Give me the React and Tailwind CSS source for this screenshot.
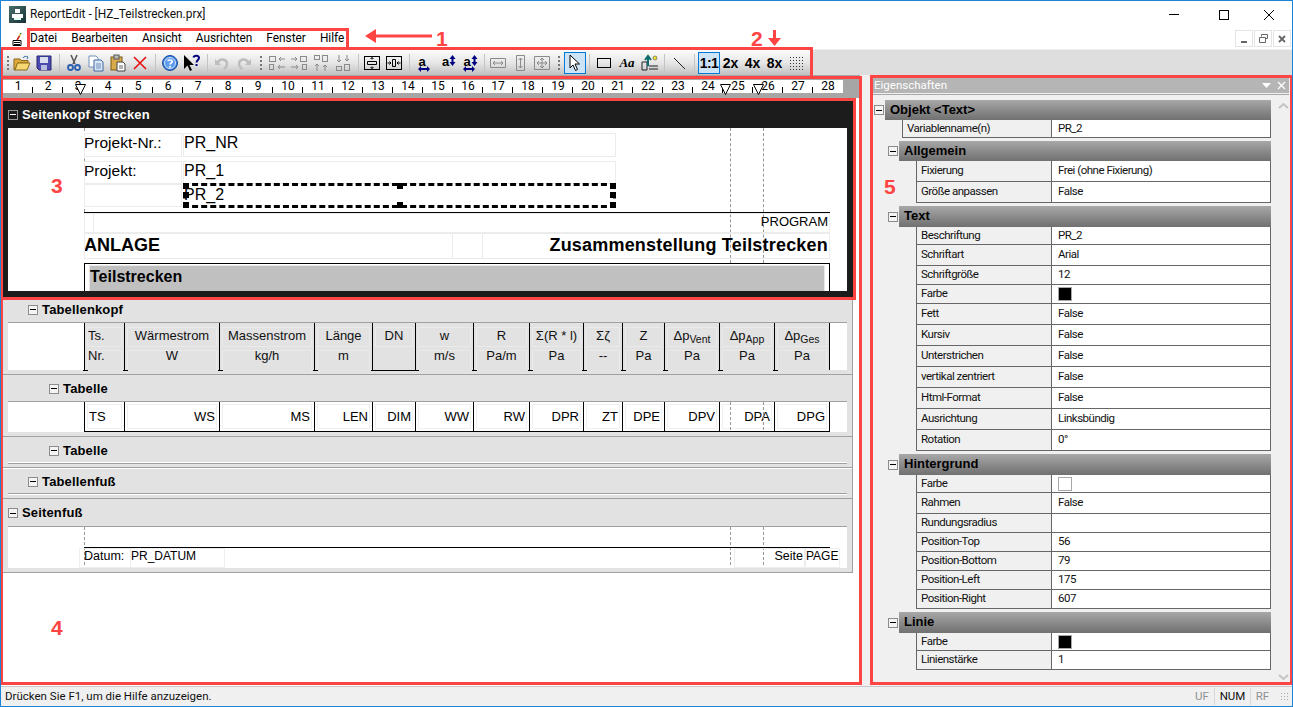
import React from 'react';

const UI = "font-['Roboto',sans-serif]";
const ARIAL = "font-['Liberation_Sans',sans-serif]";

// header and body columns of the report table
const columns = [
  { w: 40, top: 'Ts.', bottom: 'Nr.', body: 'TS', left: true },
  { w: 95, top: 'Wärmestrom', bottom: 'W', body: 'WS' },
  { w: 95, top: 'Massenstrom', bottom: 'kg/h', body: 'MS' },
  { w: 58, top: 'Länge', bottom: 'm', body: 'LEN' },
  { w: 43, top: 'DN', bottom: '', body: 'DIM', dn: true },
  { w: 58, top: 'w', bottom: 'm/s', body: 'WW' },
  { w: 56, top: 'R', bottom: 'Pa/m', body: 'RW' },
  { w: 54, top: 'Σ(R * l)', bottom: 'Pa', body: 'DPR' },
  { w: 39, top: 'Σζ', bottom: '--', body: 'ZT' },
  { w: 42, top: 'Z', bottom: 'Pa', body: 'DPE' },
  { w: 55, top: 'Δp', sub: 'Vent', bottom: 'Pa', body: 'DPV' },
  { w: 55, top: 'Δp', sub: 'App', bottom: 'Pa', body: 'DPA' },
  { w: 55, top: 'Δp', sub: 'Ges', bottom: 'Pa', body: 'DPG' },
];

const propertyGroups = [
  {
    name: 'Objekt <Text>', root: true, h: 20,
    rows: [['Variablenname(n)', 'PR_2', 18]],
  },
  {
    name: 'Allgemein', h: 20,
    rows: [['Fixierung', 'Frei (ohne Fixierung)', 21], ['Größe anpassen', 'False', 21]],
  },
  {
    name: 'Text', h: 21,
    rows: [
      ['Beschriftung', 'PR_2', 18], ['Schriftart', 'Arial', 21], ['Schriftgröße', '12', 19],
      ['Farbe', '#000', 19], ['Fett', 'False', 21], ['Kursiv', 'False', 21],
      ['Unterstrichen', 'False', 21], ['vertikal zentriert', 'False', 21], ['Html-Format', 'False', 21],
      ['Ausrichtung', 'Linksbündig', 21], ['Rotation', '0°', 21],
    ],
  },
  {
    name: 'Hintergrund', h: 21,
    rows: [
      ['Farbe', '#fff', 18], ['Rahmen', 'False', 21], ['Rundungsradius', '', 19],
      ['Position-Top', '56', 19], ['Position-Bottom', '79', 19], ['Position-Left', '175', 19], ['Position-Right', '607', 19],
    ],
  },
  {
    name: 'Linie', h: 21,
    rows: [['Farbe', '#000', 18], ['Linienstärke', '1', 19]],
  },
];

const Minus = ({ dark }) => (
  <span className={`flex h-[10px] w-[10px] shrink-0 items-center justify-center border ${dark ? 'border-[#999] bg-[#1c1c1c]' : 'border-[#8c8c8c] bg-[#f4f4f4]'}`}>
    <span className={`h-px w-[6px] ${dark ? 'bg-white' : 'bg-black'}`} />
  </span>
);

const Ico = ({ children }) => (
  <svg width="18" height="18" viewBox="0 0 18 18" fill="none">{children}</svg>
);

const Slot = ({ children, className = 'w-[22px]' }) => (
  <div className={`flex h-full shrink-0 items-center justify-center ${className}`}>{children}</div>
);

const Sep = ({ className = 'w-[8px]' }) => (
  <div className={`flex h-full shrink-0 items-center justify-center ${className}`}>
    <span className="h-[18px] w-px bg-[#c4c4c4]" />
  </div>
);

const Grip = ({ className = 'w-[11px]' }) => (
  <div className={`flex h-full shrink-0 flex-col items-center justify-center gap-[2px] ${className}`}>
    <span className="h-[2px] w-[2px] bg-[#777]" />
    <span className="h-[2px] w-[2px] bg-[#777]" />
    <span className="h-[2px] w-[2px] bg-[#777]" />
    <span className="h-[2px] w-[2px] bg-[#777]" />
  </div>
);

const AlignIcon = ({ flip, vertical }) => (
  <svg width="18" height="18" viewBox="0 0 18 18" fill="none" stroke="#8a8a8a">
    <g transform={`${vertical ? 'rotate(90 9 9)' : ''} ${flip ? 'translate(18 0) scale(-1 1)' : ''}`}>
      <rect x="1.5" y="2.5" width="6" height="5" />
      <rect x="1.5" y="10.5" width="4" height="5" />
      <path d="M11 5h6M13 3l-2 2 2 2M10 13h7M12 11l-2 2 2 2" />
    </g>
  </svg>
);

// wide frame with a bar in the middle and arrows pushing outwards
const SpaceIcon = ({ horizontal }) => (
  <svg width="18" height="16" viewBox="0 0 18 16" fill="none" stroke="#000">
    <rect x=".5" y="1.500" width="15" height="13" />
    {horizontal ? (
      <path d="M6.500 4.500h3v7h-3zM1.500 8h3M3.500 6.500L5 8l-1.500 1.500M14.500 8h-3M12.500 6.500L11 8l1.500 1.500" />
    ) : (
      <path d="M3.500 6.500h9v3h-9zM8 2.500v2M6.500 4L8 2.500 9.500 4M8 13.500v-2M6.500 12L8 13.500 9.500 12" />
    )}
  </svg>
);

const SizeIcon = ({ horizontal }) => (
  <svg width="18" height="18" viewBox="0 0 18 18" fill="none" stroke="#8a8a8a">
    {horizontal ? (
      <path d="M.5 4.500h15v9H.5zM3 9h10M5 7L3 9l2 2M11 7l2 2-2 2" />
    ) : (
      <path d="M4.500 1.500h8v15h-8zM8.500 4v10M6.500 6l2-2 2 2M6.500 12l2 2 2-2" />
    )}
  </svg>
);

const LetterIcon = ({ vertical, horizontal }) => (
  <div className="relative h-[18px] w-[18px]">
    <span className={`${ARIAL} absolute left-[3px] top-[-2px] text-[13px] font-bold text-black`}>a</span>
    {vertical && (
      <svg className="absolute left-[10px] top-[1px]" width="7" height="11" viewBox="0 0 7 11" fill="#000080">
        <path d="M3.5 0L6.5 4h-2v3h2l-3 4-3-4h2V4h-2z" />
      </svg>
    )}
    {horizontal && (
      <svg className="absolute bottom-0 left-[2px]" width="12" height="6" viewBox="0 0 12 6" fill="#000080">
        <path d="M0 3l3-3v2h6V0l3 3-3 3V4H3v2z" />
      </svg>
    )}
  </div>
);

const Toolbar = () => (
  <div className="flex h-[26px] w-[811px] items-center bg-linear-to-b from-[#fbfbfb] via-[#e6e6e6] to-[#bdbdbd] pl-[3px]">
    <Grip className="w-[7px]" />
    <Slot>
      <Ico>
        <path d="M1 5h6l1 1.500h7V9H5L2 16H1z" fill="#e0a93a" stroke="#8a6a1c" />
        <path d="M4.500 9H17l-3 7H2z" fill="#f7d674" stroke="#8a6a1c" />
        <path d="M10 4c1-2 3-2 5-1l-1 2" stroke="#3b6ea8" />
      </Ico>
    </Slot>
    <Slot>
      <Ico>
        <path d="M2 2h14v14H4l-2-2z" fill="#4a4ab0" stroke="#26266e" />
        <rect x="5" y="3" width="8" height="6" fill="#d8def0" />
        <rect x="6" y="11" width="6" height="5" fill="#b7bde0" />
      </Ico>
    </Slot>
    <Sep />
    <Slot>
      <Ico>
        <path d="M6 1l4 9M12 1l-4 9" stroke="#555" strokeWidth="1.500" />
        <circle cx="5.500" cy="13.500" r="2.500" stroke="#2c5fb0" strokeWidth="1.800" />
        <circle cx="12.500" cy="13.500" r="2.500" stroke="#2c5fb0" strokeWidth="1.800" />
      </Ico>
    </Slot>
    <Slot>
      <Ico>
        <path d="M2 2h7l2 2v9H2z" fill="#fff" stroke="#6f8fbd" />
        <path d="M7 6h7l2 2v9H7z" fill="#dbe6f5" stroke="#3f68a5" />
        <path d="M9 10h5M9 12h5M9 14h5" stroke="#6f8fbd" />
      </Ico>
    </Slot>
    <Slot>
      <Ico>
        <rect x="2" y="3" width="11" height="13" fill="#d9ab4c" stroke="#7a5a16" />
        <rect x="5" y="1" width="5" height="4" fill="#bbb" stroke="#555" />
        <path d="M8 8h6l2 2v7H8z" fill="#fff" stroke="#444" />
        <path d="M10 12h4M10 14h4" stroke="#666" />
      </Ico>
    </Slot>
    <Slot>
      <Ico>
        <path d="M3 3l12 12M15 3L3 15" stroke="#e81010" strokeWidth="1.600" />
      </Ico>
    </Slot>
    <Sep />
    <Slot>
      <Ico>
        <circle cx="9" cy="9" r="7.500" fill="#3d7fdb" stroke="#1c4f9e" />
        <circle cx="9" cy="9" r="5.500" fill="#5d9cec" stroke="#cfe2fa" />
        <path d="M6.800 7.200C7 5.500 11.200 5.500 11.200 7.500 11.200 9 9 9 9 10.500" stroke="#fff" strokeWidth="1.600" />
        <circle cx="9" cy="12.800" r="1" fill="#fff" />
      </Ico>
    </Slot>
    <Slot>
      <Ico>
        <path d="M1 1v14l3.500-3.500L7 17l2-1-2.500-5H11z" fill="#000" />
        <path d="M10.500 3.500C11 1 16 1 16 4c0 2-2.500 2-2.500 4.500" stroke="#000080" strokeWidth="2" />
        <rect x="12.500" y="10" width="2" height="2" fill="#000080" />
      </Ico>
    </Slot>
    <Sep />
    <Slot>
      <Ico>
        <path d="M5 9c0-3 5-5 8-2 2 2 1 6-2 8" stroke="#bdbdbd" strokeWidth="2.500" />
        <path d="M2 5v6h6z" fill="#bdbdbd" />
      </Ico>
    </Slot>
    <Slot>
      <Ico>
        <path d="M13 9c0-3-5-5-8-2-2 2-1 6 2 8" stroke="#bdbdbd" strokeWidth="2.500" />
        <path d="M16 5v6h-6z" fill="#bdbdbd" />
      </Ico>
    </Slot>
    <Grip />
    <Slot><AlignIcon /></Slot>
    <Slot><AlignIcon flip /></Slot>
    <Slot><AlignIcon vertical /></Slot>
    <Slot><AlignIcon vertical flip /></Slot>
    <Sep />
    <Slot><SpaceIcon /></Slot>
    <Slot><SpaceIcon horizontal /></Slot>
    <Sep className="w-[6px]" />
    <Slot className="w-[25px]"><LetterIcon horizontal /></Slot>
    <Slot className="w-[22px]"><LetterIcon vertical /></Slot>
    <Slot className="w-[21px]"><LetterIcon vertical horizontal /></Slot>
    <Sep className="w-[8px]" />
    <Slot><SizeIcon horizontal /></Slot>
    <Slot><SizeIcon /></Slot>
    <Slot>
      <svg width="18" height="18" viewBox="0 0 18 18" fill="none" stroke="#8a8a8a">
        <path d="M.5 2.500h15v13H.5zM3 9h10M8 5v8M5 7L3 9l2 2M11 7l2 2-2 2M6 6l2-2 2 2M6 12l2 2 2-2" />
      </svg>
    </Slot>
    <Grip className="w-[10px]" />
    <div className="flex h-[22px] w-[22px] shrink-0 items-center justify-center border border-[#0078d7] bg-[#cde4f7]">
      <svg width="14" height="18" viewBox="0 0 14 18" fill="#fff" stroke="#000">
        <path d="M2 1v13l3-3 2.500 5.500 2-1L7 10h4.500z" />
      </svg>
    </div>
    <Sep className="w-[7px]" />
    <Slot>
      <svg width="14" height="10" viewBox="0 0 14 10" fill="none" stroke="#000"><rect x=".5" y=".5" width="13" height="9" /></svg>
    </Slot>
    <Slot className="w-[24px]"><span className="font-['Liberation_Serif',serif] text-[13px] font-bold italic">Aa</span></Slot>
    <Slot className="w-[22px]">
      <Ico>
        <path d="M1 8h5v8H1zM8 12h9M8 15h9" stroke="#222" />
        <path d="M7 2v10M4 6l3-4 3 4" stroke="#0c6b6b" strokeWidth="2" />
        <circle cx="14" cy="4" r="2" fill="#f2e13a" stroke="#333" strokeWidth=".5" />
      </Ico>
    </Slot>
    <Sep className="w-[7px]" />
    <Slot>
      <svg width="14" height="14" viewBox="0 0 14 14" stroke="#222"><path d="M2 2l11 11" /></svg>
    </Slot>
    <Sep />
    <div className={`${ARIAL} flex h-[22px] w-[22px] shrink-0 items-center justify-center border border-[#0078d7] bg-[#cde4f7] text-[14px] font-bold tracking-[-0.5px]`}>1:1</div>
    <Slot className={`${ARIAL} w-[21px] text-[14px] font-bold`}>2x</Slot>
    <Slot className={`${ARIAL} w-[23px] text-[14px] font-bold`}>4x</Slot>
    <Slot className={`${ARIAL} w-[21px] text-[14px] font-bold`}>8x</Slot>
    <Slot className="w-[22px]">
      <span className="h-[15px] w-[15px] bg-[radial-gradient(#333_0.7px,transparent_0.8px)] bg-size-[3px_3px]" />
    </Slot>
  </div>
);

const Ruler = () => (
  <div className="h-[23px] bg-[#a6a6a6] pl-[2px] pt-[5px]">
    <div className={`${UI} relative flex h-[13px] w-[840px] bg-white text-[12px] leading-[13px] text-black`}>
      {Array.from({ length: 28 }, (_, i) => (
        <div key={i} className="relative w-[30px] text-center">
          {i + 1}
          {i < 27 && <span className="absolute bottom-0 right-0 h-[6px] w-px bg-black" />}
        </div>
      ))}
      {[72, 717, 750].map((x) => (
        <svg key={x} className="absolute top-[4px]" style={{ left: x }} width="11" height="11" viewBox="0 0 11 11" fill="#fff" stroke="#000">
          <path d="M.5 .5h10L5.500 10.500z" />
        </svg>
      ))}
    </div>
  </div>
);

const BandTitle = ({ children, className, dark }) => (
  <div className={`flex items-center gap-[4px] ${className}`}>
    <Minus dark={dark} />
    <span className={`${ARIAL} text-[13px] font-bold tracking-[0.15px] ${dark ? 'text-white' : 'text-black'}`}>{children}</span>
  </div>
);

const Field = ({ className, children }) => (
  <div className={`${ARIAL} absolute overflow-hidden border border-[#ececec] text-black ${className}`}>{children}</div>
);

const Handle = ({ className }) => <span className={`absolute h-[6px] w-[6px] bg-black ${className}`} />;

const PageHeader = () => (
  <div className="bg-[#1c1c1c] px-[5px] pb-[8px] pt-[3px]">
    <BandTitle dark className="h-[27px]">Seitenkopf Strecken</BandTitle>
    <div className="relative h-[163px] w-[839px] bg-white">
      <span className="absolute left-[76px] top-0 h-[84px] border-l border-dashed border-[#999]" />
      <span className="absolute left-[722px] top-0 h-[135px] border-l border-dashed border-[#999]" />
      <span className="absolute left-[755px] top-0 h-[135px] border-l border-dashed border-[#999]" />

      <Field className="left-[76px] top-[5px] h-[24px] w-[98px] indent-[-1px] text-[15.500px] leading-[18px]">Projekt-Nr.:</Field>
      <Field className="left-[175px] top-[5px] h-[24px] w-[433px] text-[16px] leading-[18px]">PR_NR</Field>
      <Field className="left-[76px] top-[33px] h-[23px] w-[98px] indent-[-1px] text-[15.500px] leading-[18px]">Projekt:</Field>
      <Field className="left-[175px] top-[33px] h-[23px] w-[433px] text-[16px] leading-[18px]">PR_1</Field>
      <Field className="left-[76px] top-[56px] h-[23px] w-[98px]" />

      <div className={`${ARIAL} absolute left-[175px] top-[55px] h-[25px] w-[433px] border-[3px] border-dashed border-black indent-[-2px] text-[16px] leading-[17px]`}>PR_2</div>
      <Handle className="left-[175px] top-[55px]" />
      <Handle className="left-[175px] top-[64px]" />
      <Handle className="left-[175px] top-[74px]" />
      <Handle className="left-[389px] top-[55px]" />
      <Handle className="left-[389px] top-[74px]" />
      <Handle className="left-[602px] top-[55px]" />
      <Handle className="left-[602px] top-[64px]" />
      <Handle className="left-[602px] top-[74px]" />

      <span className="absolute left-[76px] top-[84px] h-px w-[746px] bg-black" />
      <Field className="left-[76px] top-[85px] h-[20px] w-[10px]" />
      <Field className="left-[85px] top-[85px] h-[20px] w-[737px] pr-px text-right text-[13px] leading-[16px]">PROGRAM</Field>
      <Field className="left-[76px] top-[105px] h-[26px] w-[369px] indent-[-1px] text-[18px] font-bold leading-[23px]">ANLAGE</Field>
      <Field className="left-[444px] top-[105px] h-[26px] w-[31px]" />
      <Field className="left-[474px] top-[105px] h-[26px] w-[348px] pr-px text-right text-[18px] font-bold leading-[23px] tracking-[0.2px]">Zusammenstellung Teilstrecken</Field>

      <div className="absolute left-[76px] top-[135px] h-[28px] w-[746px] border-x border-t border-black pl-[4px] pr-[4px] pt-px">
        <div className={`${ARIAL} h-full border-x border-t border-[#e8e8e8] bg-[#c0c0c0] text-[16px] font-bold leading-[22px] text-black`}>Teilstrecken</div>
      </div>
    </div>
  </div>
);

const Sub = ({ col }) => (
  <>
    {col.top}
    {col.sub && <span className="relative top-[3px] text-[10.500px]">{col.sub}</span>}
  </>
);

const HeaderCell = ({ col, last }) => (
  <div className={`${ARIAL} relative flex h-[47px] flex-col gap-[3px] border-l border-black px-[2px] pt-[4px] text-[13px] text-[#111] ${col.left ? 'text-left' : 'text-center'}`} style={{ width: col.w }}>
    <div className="h-[20px] border border-[#eaeaea] leading-[16px]"><Sub col={col} /></div>
    {!col.dn && <div className="h-[20px] border border-b-0 border-[#eaeaea] leading-[10px]">{col.bottom}</div>}
    {col.dn
      ? <span className="absolute bottom-[-1px] left-[-2px] h-px w-[46px] bg-black" />
      : <span className="absolute bottom-[-1px] left-[-2px] h-px w-[5px] bg-black" />}
    {last && <span className="absolute bottom-0 right-[-1px] h-[47px] w-px bg-black" />}
  </div>
);

const BodyCell = ({ col, last }) => (
  <div className={`${ARIAL} relative h-[29px] border-l border-black px-[2px] pt-[2px] text-[13px] text-black ${col.left ? 'text-left' : 'text-right'}`} style={{ width: col.w }}>
    <div className={`h-[25px] border border-[#f0f0f0] pr-px leading-[23px] ${col.left ? 'pl-px' : ''}`}>{col.body}</div>
    {last && <span className="absolute bottom-0 right-[-1px] h-[29px] w-px bg-black" />}
  </div>
);

const Divider = () => <div className="h-px bg-[#a0a0a0]" />;

const Bands = () => (
  <div className="w-[850px] border-r border-b border-[#a0a0a0] bg-[#e2e2e2]">
    <div className="h-[75px] pl-[5px]">
      <BandTitle className="h-[23px] pb-[2px] pl-[20px]">Tabellenkopf</BandTitle>
      <div className="flex h-[48px] w-[839px] border-t border-[#a0a0a0]">
        <div className="w-[76px] bg-white" />
        <div className="flex w-[746px]">
          {columns.map((col, i) => <HeaderCell key={i} col={col} last={i === columns.length - 1} />)}
        </div>
        <div className="flex-1 bg-white" />
      </div>
    </div>
    <Divider />
    <div className="h-[61px] pl-[5px]">
      <BandTitle className="h-[26px] pl-[41px] pt-px">Tabelle</BandTitle>
      <div className="relative flex h-[31px] w-[839px] border-t border-[#a0a0a0] bg-white">
        <div className="w-[76px]" />
        <div className="flex h-[30px] w-[746px] border-b border-black">
          {columns.map((col, i) => <BodyCell key={i} col={col} last={i === columns.length - 1} />)}
        </div>
        <span className="absolute left-[722px] top-0 h-[28px] border-l border-dashed border-[#999]" />
        <span className="absolute left-[755px] top-0 h-[28px] border-l border-dashed border-[#999]" />
      </div>
    </div>
    <Divider />
    <div className="h-[30px] pl-[5px]">
      <BandTitle className="h-[25px] pl-[41px] pt-[2px]">Tabelle</BandTitle>
      <div className="w-[839px] border-t border-white" />
      <div className="w-[839px] border-t border-[#a0a0a0]" />
    </div>
    <Divider />
    <div className="h-[30px] border-t border-white pl-[5px]">
      <BandTitle className="h-[24px] pl-[20px] pt-[1px]">Tabellenfuß</BandTitle>
      <div className="w-[839px] border-t border-[#a0a0a0]" />
      <div className="w-[839px] border-t border-white" />
    </div>
    <Divider />
    <div className="h-[73px] pl-[5px]">
      <BandTitle className="h-[27px] pt-px">Seitenfuß</BandTitle>
      <div className="relative h-[42px] w-[839px] border-t border-[#a0a0a0] bg-white">
        <span className="absolute left-[76px] top-0 h-[38px] border-l border-dashed border-[#999]" />
        <span className="absolute left-[722px] top-0 h-[38px] border-l border-dashed border-[#999]" />
        <span className="absolute left-[755px] top-0 h-[38px] border-l border-dashed border-[#999]" />
        <span className="absolute left-[76px] top-[20px] h-px w-[746px] bg-black" />
        <div className={`${ARIAL} absolute left-[71px] top-[21px] h-[20px] w-[52px] border border-[#eee] pl-[4px] text-[12.500px] leading-[14px]`}>Datum:</div>
        <div className={`${ARIAL} absolute left-[122px] top-[21px] h-[20px] w-[95px] border border-[#eee] text-[12px] leading-[14px]`}>PR_DATUM</div>
        <div className={`${ARIAL} absolute left-[726px] top-[21px] h-[20px] w-[71px] border border-[#eee] pr-px text-right text-[12.500px] leading-[14px]`}>Seite</div>
        <div className={`${ARIAL} absolute left-[797px] top-[21px] h-[20px] w-[35px] border border-[#eee] text-[12px] leading-[14px]`}>PAGE</div>
      </div>
    </div>
  </div>
);

const Swatch = ({ color }) => (
  <span className={`block h-[14px] w-[14px] border border-[#a8a8a8] ${color === '#000' ? 'bg-black' : 'bg-white'}`} />
);

const PropRow = ({ row, root }) => {
  const [label, value, h] = row;
  return (
    <div className={`flex border-x border-b border-[#666] text-[11.500px] tracking-[-0.5px] text-[#111] ${root ? 'ml-[28px]' : 'ml-[42px]'}`} style={{ height: h }}>
      <div className={`${root ? 'w-[149px]' : 'w-[135px]'} flex shrink-0 items-center border-r border-[#666] bg-[#f0f0f0] pl-[4px]`}>{label}</div>
      <div className="flex flex-1 items-center bg-white pl-[6px]">
        {value.startsWith('#') ? <Swatch color={value} /> : value}
      </div>
    </div>
  );
};

const PropGroup = ({ group }) => (
  <div className="mb-[3px]">
    <div className={`flex items-center ${group.root ? '' : 'pl-[14px]'}`}>
      <Minus />
      <div className={`${ARIAL} ml-px flex-1 bg-linear-to-b from-[#a8a8a8] to-[#707070] pl-[5px] text-[13px] font-bold leading-[20px] text-black`} style={{ height: group.h }}>
        {group.name}
      </div>
    </div>
    {group.rows.map((row, i) => <PropRow key={i} row={row} root={group.root} />)}
  </div>
);

const Chevron = ({ up }) => (
  <svg width="11" height="7" viewBox="0 0 11 7" fill="none" stroke="#c4c4c4" strokeWidth="2">
    <path d={up ? 'M1 6l4.500-4 4.500 4' : 'M1 1l4.500 4 4.500-4'} />
  </svg>
);

const PropertiesPanel = () => (
  <div className={`${UI} flex-1 pl-[12px] pt-[3px]`}>
    <div className="flex h-[15px] w-[417px] items-center justify-between bg-[#b5b5b5] pl-[2px] pr-[3px] text-[11.500px] text-white">
      <span>Eigenschaften</span>
      <span className="flex items-center gap-[6px]">
        <svg width="9" height="5" viewBox="0 0 9 5" fill="#fff"><path d="M0 0h9L4.500 5z" /></svg>
        <svg width="9" height="9" viewBox="0 0 9 9" stroke="#fff" strokeWidth="1.300"><path d="M1 1l7 7M8 1L1 8" /></svg>
      </span>
    </div>
    <div className="h-[2px] w-[417px] border-b border-[#a8a8a8]" />
    <div className="flex pl-[2px] pt-[5px]">
      <div className="w-[397px]">
        {propertyGroups.map((group) => <PropGroup key={group.name} group={group} />)}
      </div>
      <div className="flex h-[581px] w-[16px] flex-col items-center justify-between pl-[8px] pt-[2px]">
        <Chevron up />
        <Chevron />
      </div>
    </div>
  </div>
);

const RedBox = ({ className }) => <div className={`pointer-events-none absolute border-[3px] border-[#ff4444] ${className}`} />;

const Mark = ({ className, children }) => (
  <span className={`${ARIAL} absolute text-[21px] font-bold leading-none text-[#ff4444] ${className}`}>{children}</span>
);

export default function App() {
  return (
    <div className={`${UI} relative flex h-[707px] w-[1293px] flex-col overflow-hidden border border-[#1b84d6] bg-white`}>
      {/* title bar */}
      <div className="flex h-[27px] shrink-0 items-center pl-[8px]">
        <div className="flex h-[17px] w-[17px] items-center justify-center bg-linear-to-br from-[#4a7070] to-[#173234]">
          <svg width="11" height="11" viewBox="0 0 11 11" fill="#fff"><path d="M3 0h5v4H3zM0 5h11v4H0z" /><path d="M2 9h7v2H2z" fill="#dfe" /></svg>
        </div>
        <span className="ml-[4px] text-[11.900px] text-[#111]">ReportEdit - [HZ_Teilstrecken.prx]</span>
        <div className="ml-auto flex items-center pr-[18px]">
          <span className="mr-[40px] h-px w-[10px] bg-black" />
          <span className="mr-[35px] h-[10px] w-[10px] border border-black" />
          <svg width="10" height="10" viewBox="0 0 10 10" stroke="#000"><path d="M0 0l10 10M10 0L0 10" /></svg>
        </div>
      </div>

      {/* menu bar */}
      <div className="flex h-[21px] shrink-0 items-center text-[11.850px] text-black">
        <svg className="ml-[11px] mr-[7px]" width="11" height="14" viewBox="0 0 11 14" fill="none">
          <path d="M1 8.500h8v5H1z" fill="#fff" stroke="#000" />
          <path d="M2 10.500h6M2 12.500h6" stroke="#000" />
          <path d="M5 8l2.500-4" stroke="#c02020" strokeWidth="1.500" />
          <path d="M7.500 4l1-2" stroke="#d8b020" strokeWidth="1.500" />
          <path d="M8.500 2l.5-1" stroke="#2a8a2a" strokeWidth="1.500" />
        </svg>
        <div className="flex gap-[14px]">
          <span>Datei</span>
          <span>Bearbeiten</span>
          <span>Ansicht</span>
          <span>Ausrichten</span>
          <span>Fenster</span>
          <span>Hilfe</span>
        </div>
        <div className="ml-auto flex gap-px pr-px">
          <div className="flex h-[17px] w-[18px] items-end justify-center border border-[#e4e4e4] pb-[3px]"><span className="h-[2px] w-[6px] bg-[#666]" /></div>
          <div className="flex h-[17px] w-[18px] items-center justify-center border border-[#e4e4e4]">
            <svg width="9" height="9" viewBox="0 0 9 9" fill="none" stroke="#666"><path d="M2.500 2.500v-2h6v4h-2M.5 3.500h6v5h-6z" /></svg>
          </div>
          <div className="flex h-[17px] w-[18px] items-center justify-center border border-[#e4e4e4]">
            <svg width="8" height="8" viewBox="0 0 8 8" stroke="#666" strokeWidth="1.800"><path d="M1 1l6 6M7 1L1 7" /></svg>
          </div>
        </div>
      </div>

      {/* toolbar */}
      <div className="h-[26px] shrink-0 border-t border-[#f0f0f0] bg-[#dedede]">
        <Toolbar />
      </div>

      {/* work area */}
      <div className="flex h-[611px] shrink-0 bg-[#f0f0f0]">
        <div className="w-[859px] shrink-0 bg-white">
          <Ruler />
          <div className="pl-[2px]">
            <div className="w-[850px]"><PageHeader /></div>
            <Bands />
          </div>
        </div>
        <PropertiesPanel />
      </div>

      {/* status bar */}
      <div className="flex h-[20px] shrink-0 items-center border-t border-[#c8c8c8] bg-[#f0f0f0] pl-[4px] text-[11.500px] text-[#111]">
        <span>Drücken Sie F1, um die Hilfe anzuzeigen.</span>
        <div className="ml-auto flex items-center pr-[3px]">
          <span className="w-[24px] text-center text-[#909090]">UF</span>
          <span className="w-[36px] border-l border-[#d8d8d8] text-center">NUM</span>
          <span className="w-[24px] border-l border-[#d8d8d8] text-center text-[#909090]">RF</span>
          <span className="ml-[6px] h-[10px] w-[9px] bg-[radial-gradient(#aaa_0.8px,transparent_0.9px)] bg-size-[3px_3px]" />
        </div>
      </div>

      {/* red annotations drawn over the screenshot */}
      <RedBox className="left-[26px] top-[27px] h-[22px] w-[322px]" />
      <RedBox className="left-[-1px] top-[46px] h-[32px] w-[813px]" />
      <RedBox className="left-[-1px] top-[75px] h-[609px] w-[862px]" />
      <RedBox className="left-[-1px] top-[97px] h-[202px] w-[856px]" />
      <RedBox className="left-[869px] top-[74px] h-[610px] w-[423px]" />
      <svg className="absolute left-[363px] top-[27px]" width="68" height="16" viewBox="0 0 68 16" fill="#ff4444">
        <path d="M1 8l11-7v5.500h56v3H12V15z" />
      </svg>
      <Mark className="left-[435px] top-[27px]">1</Mark>
      <Mark className="left-[750px] top-[27px]">2</Mark>
      <svg className="absolute left-[767px] top-[29px]" width="13" height="16" viewBox="0 0 13 16" fill="#ff4444">
        <path d="M5 0h3v8h5l-6.500 8L0 8h5z" />
      </svg>
      <Mark className="left-[50px] top-[174px]">3</Mark>
      <Mark className="left-[50px] top-[616px]">4</Mark>
      <Mark className="left-[883px] top-[175px]">5</Mark>
    </div>
  );
}
